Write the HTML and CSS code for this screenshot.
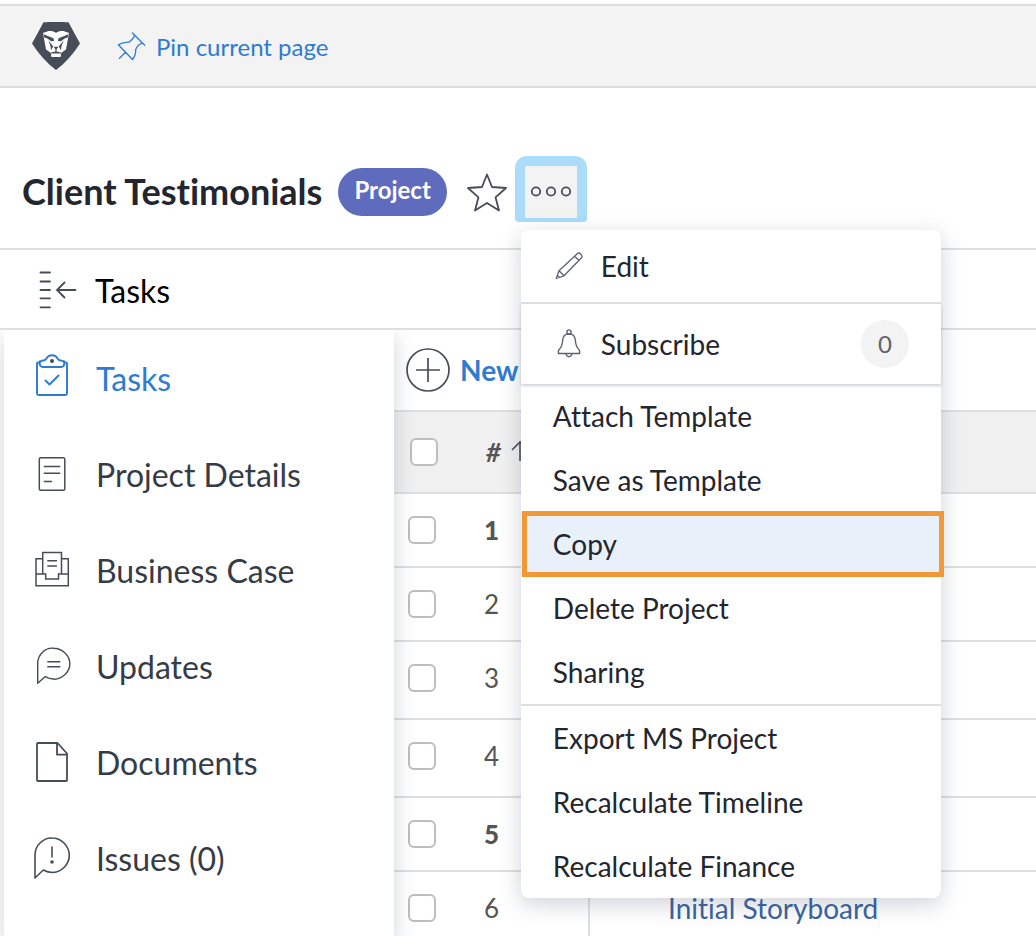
FILE: index.html
```html
<!DOCTYPE html>
<html lang="en">
<head>
<meta charset="utf-8">
<meta name="viewport" content="width=device-width, initial-scale=1">
<title>Client Testimonials</title>
<link rel="stylesheet" href="styles.css">
</head>
<body>
<header class="topbar">
  <svg class="logo" viewBox="32 22 48 48" aria-hidden="true">
    <path fill="#474c59" d="M43.500 22.300Q56 21.400 68.500 22.300L80 43.500Q69.500 60 56 70Q42.500 60 32 43.500Z"/>
    <path fill="#fff" d="M43 33L48.500 31L52 31L56 32.800L60 31L63.500 31L69 33L66 49.500L61.300 52.800L60.600 57H51.400L50.700 52.800L46 49.500Z"/>
    <path fill="#474c59" d="M43.500 34.300L53.500 38.300L54 41L51.200 41.300L47 38.300L44.500 37.800ZM68.500 34.300L58.500 38.300L58 41L60.800 41.300L65 38.300L67.500 37.800Z"/>
    <path fill="#474c59" d="M48.300 40.300L53.200 46.500L51 50.300L50.500 46ZM63.700 40.300L58.800 46.500L61 50.300L61.500 46ZM53.500 46.800H58.500L56.600 49.300V51.500L61 52.500V53.500H51V52.500L55.400 51.500V49.300Z"/>
  </svg>
  <a class="pin" href="#">
    <svg class="pin-icon" viewBox="117 32 29 29" aria-hidden="true"><path fill="none" stroke="#2e7bd2" stroke-width="1.300" stroke-linejoin="round" stroke-linecap="round" d="M132.500 33L144.700 45.300M134.500 35.200Q134 38.500 129 42.200Q123 42 118.300 44.800L132.500 59.500Q136 55 135.700 49.500Q138 44.500 142.200 43.200M125.500 52.200L119.500 58.200"/></svg>
    <span>Pin current page</span>
  </a>
</header>

<section class="titlebar">
  <h1 class="title">Client Testimonials</h1>
  <span class="badge">Project</span>
  <button class="star" type="button" aria-label="Favorite">
    <svg viewBox="466 171 44 42" aria-hidden="true"><path fill="none" stroke="#474c59" stroke-width="1.800" stroke-linejoin="round" d="M488 174.500L493 187L507 188L496.500 197.300L500 210.500L488 203L476 210.500L479.500 197.300L469 188L483 187Z"/></svg>
  </button>
  <div class="more">
    <button class="more-button" type="button" aria-label="More" aria-expanded="true">
      <svg viewBox="530 184 44 16" aria-hidden="true"><g fill="none" stroke="#474c59" stroke-width="1.800"><circle cx="537" cy="191.500" r="4.200"/><circle cx="552" cy="191.500" r="4.200"/><circle cx="567" cy="191.500" r="4.200"/></g></svg>
    </button>
    <div class="menu">
      <button class="menu-item edit" type="button">
        <svg class="menu-icon" viewBox="554 250 32 32" aria-hidden="true"><g fill="none" stroke="#5c6270" stroke-width="1.300" stroke-linejoin="round"><path d="M557.300 278.500L560 270.800L578.500 253.500Q580 252.300 581.800 254.200L582.300 254.800Q583.800 256.600 582.300 258L565 275.800ZM560 270.800L565 275.800M575.700 256.300L580 260.500M558.300 275.500L560.500 277.500"/></g></svg>
        <span>Edit</span>
      </button>
      <button class="menu-item subscribe" type="button">
        <svg class="menu-icon" viewBox="554 329 32 32" aria-hidden="true"><g fill="none" stroke="#5c6270" stroke-width="1.400" stroke-linejoin="round"><circle cx="570" cy="333" r="2.100"/><path d="M567.500 335.200Q564.200 336.500 563.700 341Q563.300 347.500 559.800 351Q559 352 559.500 354.500H580.500Q581 352 580.200 351Q576.700 347.500 576.300 341Q575.800 336.500 572.500 335.200ZM567 354.500Q567.500 357.700 570 357.700T573 354.500"/></g></svg>
        <span>Subscribe</span>
        <span class="count">0</span>
      </button>
      <div class="menu-group">
        <button class="menu-item" type="button">Attach Template</button>
        <button class="menu-item" type="button">Save as Template</button>
        <button class="menu-item selected" type="button">Copy</button>
        <button class="menu-item" type="button">Delete Project</button>
        <button class="menu-item" type="button">Sharing</button>
      </div>
      <div class="menu-group exports">
        <button class="menu-item" type="button">Export MS Project</button>
        <button class="menu-item" type="button">Recalculate Timeline</button>
        <button class="menu-item" type="button">Recalculate Finance</button>
      </div>
    </div>
  </div>
</section>

<section class="subbar">
  <button class="collapse" type="button" aria-label="Collapse sidebar">
    <svg viewBox="36 270 42 40" aria-hidden="true"><path fill="none" stroke="#474c59" stroke-width="1.800" stroke-linecap="round" d="M40.500 272.500H50M40.500 281.500H50M40.500 290H50M40.500 298.300H50M40.500 307.300H50M57 290H75.500M64.500 282.500L57 290L64.500 297.500"/></svg>
  </button>
  <h2 class="subtitle">Tasks</h2>
</section>

<div class="workspace">
  <nav class="sidebar">
    <a class="nav-item active" href="#">
      <svg class="nav-icon" viewBox="32 354 40 48" aria-hidden="true"><g fill="none" stroke="#2e7bd2" stroke-width="1.900" stroke-linejoin="round" stroke-linecap="round"><path d="M40 362.500H38Q37 362.500 37 363.500V393.500Q37 395 38.500 395H65.500Q67 395 67 393.500V363.500Q67 362.500 66 362.500H64"/><path d="M39.500 362.500Q39.500 361 41 361Q45.500 360.500 46.500 358.500Q48 355.200 52 355.200T57.500 358.500Q58.500 360.500 63 361Q64.500 361 64.500 362.500Q64.500 367 61 367H43Q39.500 367 39.500 362.500Z"/><path d="M45.500 380.500L49.500 384.500L58.500 375.500"/></g><circle cx="52" cy="361" r="2" fill="#474c59"/></svg>
      <span>Tasks</span>
    </a>
    <a class="nav-item" href="#">
      <svg class="nav-icon" viewBox="32 450 40 48" aria-hidden="true"><g fill="none" stroke="#474c59" stroke-width="1.500" stroke-linecap="round"><rect x="39.300" y="457.800" width="25.500" height="32.500" rx="1.500"/><path d="M44.300 466.500H59.700M44.300 473.200H59.700M44.300 481.500H51.500"/></g></svg>
      <span>Project Details</span>
    </a>
    <a class="nav-item" href="#">
      <svg class="nav-icon" viewBox="32 546 40 48" aria-hidden="true"><path fill="none" stroke="#474c59" stroke-width="1.500" d="M42.500 558.700H36V585.800H68.300V558.700H62M42.700 574V552.500H61.500V574M36 574H45.700V579H58.500V574H68.300M47.300 560.700H57M47.300 566H57"/></svg>
      <span>Business Case</span>
    </a>
    <a class="nav-item" href="#">
      <svg class="nav-icon" viewBox="32 642 40 48" aria-hidden="true"><path fill="none" stroke="#474c59" stroke-width="1.400" stroke-linejoin="round" d="M37.700 683.300V663Q38 656 43 651.700T53.500 648.300Q60 648.300 65 653T69.800 664Q69.800 670 65 674.500T54.500 679.200Q49 679 45 676.700ZM47.300 661.700H60.300M47.300 666.700H60.300"/></svg>
      <span>Updates</span>
    </a>
    <a class="nav-item" href="#">
      <svg class="nav-icon" viewBox="32 738 40 48" aria-hidden="true"><path fill="none" stroke="#474c59" stroke-width="1.800" stroke-linejoin="round" d="M38 743H57.500L67 753.500V780Q67 781 66 781H38Q37 781 37 780V744Q37 743 38 743ZM57 743V754.700H67"/></svg>
      <span>Documents</span>
    </a>
    <a class="nav-item" href="#">
      <svg class="nav-icon" viewBox="32 834 40 48" aria-hidden="true"><path fill="none" stroke="#474c59" stroke-width="1.600" stroke-linejoin="round" d="M35 878V855Q35 847.500 40.500 842.500T52 838Q59 838 64 843T69.300 855Q69.300 862 64.500 867T53 872.500Q47.500 872.500 43.300 870ZM52 846.500V857.500"/><circle cx="52" cy="862" r="1.800" fill="#474c59"/></svg>
      <span>Issues (0)</span>
    </a>
  </nav>
  <main class="main">
    <div class="toolbar">
      <button class="new" type="button">
        <svg viewBox="406 348 44 44" aria-hidden="true"><g fill="none" stroke="#474c59" stroke-width="1.700"><circle cx="428" cy="370" r="21"/><path d="M416 370H440M428 358V382"/></g></svg>
        <span>New</span>
      </button>
    </div>
    <table class="tasks">
      <colgroup><col class="col-check"><col class="col-num"><col></colgroup>
      <thead>
        <tr><th class="check"><input type="checkbox" aria-label="Select all"></th><th class="sort"><span class="sort-label">#<svg viewBox="510 442 22 26" aria-hidden="true"><path fill="none" stroke="#474c59" stroke-width="1.600" d="M521 464V445M513 453L521 445L529 453"/></svg></span></th><th></th></tr>
      </thead>
      <tbody>
        <tr><td class="check"><input type="checkbox" aria-label="Select task 1"></td><td class="num parent">1</td><td></td></tr>
        <tr><td class="check"><input type="checkbox" aria-label="Select task 2"></td><td class="num">2</td><td></td></tr>
        <tr class="tall"><td class="check"><input type="checkbox" aria-label="Select task 3"></td><td class="num">3</td><td></td></tr>
        <tr class="tall"><td class="check"><input type="checkbox" aria-label="Select task 4"></td><td class="num">4</td><td></td></tr>
        <tr><td class="check"><input type="checkbox" aria-label="Select task 5"></td><td class="num parent">5</td><td></td></tr>
        <tr><td class="check"><input type="checkbox" aria-label="Select task 6"></td><td class="num">6</td><td class="name"><a href="#">Initial Storyboard</a></td></tr>
      </tbody>
    </table>
  </main>
</div>
</body>
</html>
```

FILE: styles.css
```css
* { box-sizing: border-box; }

body {
  margin: 0;
  height: 100vh;
  display: flex;
  flex-direction: column;
  overflow: hidden;
  background: #fff;
  color: #23262f;
  font-family: Lato, "Open Sans", sans-serif;
  font-size: 28px;
  font-variant-ligatures: none;
}

h1, h2 { margin: 0; }
a { color: inherit; text-decoration: none; }
svg { display: block; flex: none; }

button {
  margin: 0;
  padding: 0;
  border: 0;
  background: none;
  color: inherit;
  font: inherit;
  font-variant-ligatures: none;
  cursor: pointer;
}

/* Top bar */
.topbar {
  flex: none;
  display: flex;
  align-items: center;
  gap: 37px;
  height: 84px;
  margin-top: 4px;
  padding: 0 32px;
  border-top: 2px solid #dcdcdf;
  border-bottom: 2px solid #dcdcdf;
  background: #f3f3f3;
}
.logo { width: 48px; height: 48px; }
.pin {
  display: flex;
  align-items: center;
  gap: 10px;
  color: #2e7bd2;
  font-size: 24px;
}
.pin-icon { width: 29px; height: 29px; }

/* Project title */
.titlebar {
  flex: none;
  display: flex;
  align-items: center;
  height: 162px;
  padding: 50px 22px 2px;
  border-bottom: 2px solid #dedfe0;
}
.title {
  font-size: 36px;
  font-weight: 700;
  line-height: 44px;
  padding-bottom: 2px;
  white-space: nowrap;
}
.badge {
  margin-left: 16px;
  padding: 0 16px 4px;
  border-radius: 24px;
  background: #5f6bbd;
  color: #fff;
  font-size: 24px;
  font-weight: 700;
  line-height: 44px;
}
.star { margin-left: 18px; }
.star svg { width: 44px; height: 42px; }
.more {
  position: relative;
  margin: 0 0 6px 6px;
}
.more-button {
  display: block;
  padding: 10px 10px 4px;
  border-radius: 12px 12px 4px 4px;
  background: #abdcf9;
}
.more-button svg {
  width: 52px;
  height: 52px;
  padding: 0 4px;
  background: #f3f3f3;
}

/* Drop-down menu */
.menu {
  position: absolute;
  z-index: 10;
  top: 74px;
  left: 6px;
  width: 420px;
  border-radius: 8px;
  background: #fff;
  box-shadow: 0 6px 22px rgba(64, 74, 100, 0.25);
}
.menu-item {
  display: flex;
  align-items: center;
  width: 100%;
  height: 64px;
  padding: 0 32px;
  text-align: left;
  white-space: nowrap;
}
.menu-icon {
  width: 32px;
  height: 32px;
  margin-right: 16px;
}
.menu-item.edit {
  height: 74px;
  border-bottom: 2px solid #dedfe0;
}
.menu-item.subscribe {
  height: 80px;
  box-shadow: 0 2px 3px rgba(64, 74, 100, 0.25);
}
.count {
  width: 48px;
  margin-left: auto;
  border-radius: 50%;
  background: #f3f3f3;
  color: #5c6270;
  font-size: 24px;
  line-height: 48px;
  text-align: center;
}
.menu-item.selected {
  position: relative;
  background: #e8f0fa;
}
.menu-item.selected::after {
  content: "";
  position: absolute;
  inset: -1px -3px -1px 1px;
  border: 5px solid #f19837;
}
.exports { border-top: 2px solid #dedfe0; }

/* Section heading */
.subbar {
  flex: none;
  display: flex;
  align-items: center;
  gap: 17px;
  height: 80px;
  padding: 2px 36px 0;
  border-bottom: 2px solid #dedfe0;
}
.collapse svg { width: 42px; height: 40px; }
.subtitle {
  color: #000;
  font-size: 32px;
  font-weight: 400;
}

.workspace {
  flex: 1;
  display: flex;
  min-height: 0;
  overflow: hidden;
}

/* Sidebar */
.sidebar {
  flex: none;
  z-index: 1;
  width: 390px;
  margin-left: 4px;
  background: #fff;
  box-shadow: 0 8px 20px rgba(64, 74, 100, 0.24);
}
.nav-item {
  display: flex;
  align-items: center;
  gap: 24px;
  height: 96px;
  padding: 0 28px;
  color: #353b47;
  font-size: 32px;
}
.nav-item.active { color: #2e7bd2; }
.nav-icon { width: 40px; height: 48px; }

/* Task list */
.main { flex: 1; min-width: 0; }
.toolbar {
  display: flex;
  align-items: center;
  height: 80px;
  padding-left: 12px;
}
.new {
  display: flex;
  align-items: center;
  gap: 10px;
  color: #2e7bd2;
  font-weight: 700;
}
.new svg { width: 44px; height: 44px; }

.tasks {
  width: 100%;
  border-collapse: separate;
  border-spacing: 0;
  table-layout: fixed;
  color: #555;
}
.col-check { width: 74px; }
.col-num { width: 122px; }
.tasks th, .tasks td {
  height: 74px;
  padding: 0;
  border-bottom: 2px solid #dedfe0;
  text-align: left;
}
.tasks th {
  height: 84px;
  border-top: 2px solid #dedfe0;
  background: #f0f0f0;
}
.tasks .tall td {
  height: 78px;
  padding-bottom: 4px;
}
.tasks .check { padding-left: 14px; }
.tasks th.check { padding-left: 16px; }
.tasks input {
  display: block;
  appearance: none;
  width: 28px;
  height: 28px;
  margin: 0;
  border: 2px solid #bebebe;
  border-radius: 6px;
  background: #fff;
}
.tasks .sort { padding-left: 18px; }
.sort-label {
  display: flex;
  align-items: center;
  gap: 8px;
  font-size: 26px;
  font-style: italic;
}
.sort-label svg { width: 22px; height: 26px; }
.tasks .num {
  padding-left: 16px;
  border-right: 2px solid #dedfe0;
  font-size: 26px;
}
.parent { font-weight: 900; }
.tasks .name {
  padding-left: 78px;
  color: #3a639f;
}
```
